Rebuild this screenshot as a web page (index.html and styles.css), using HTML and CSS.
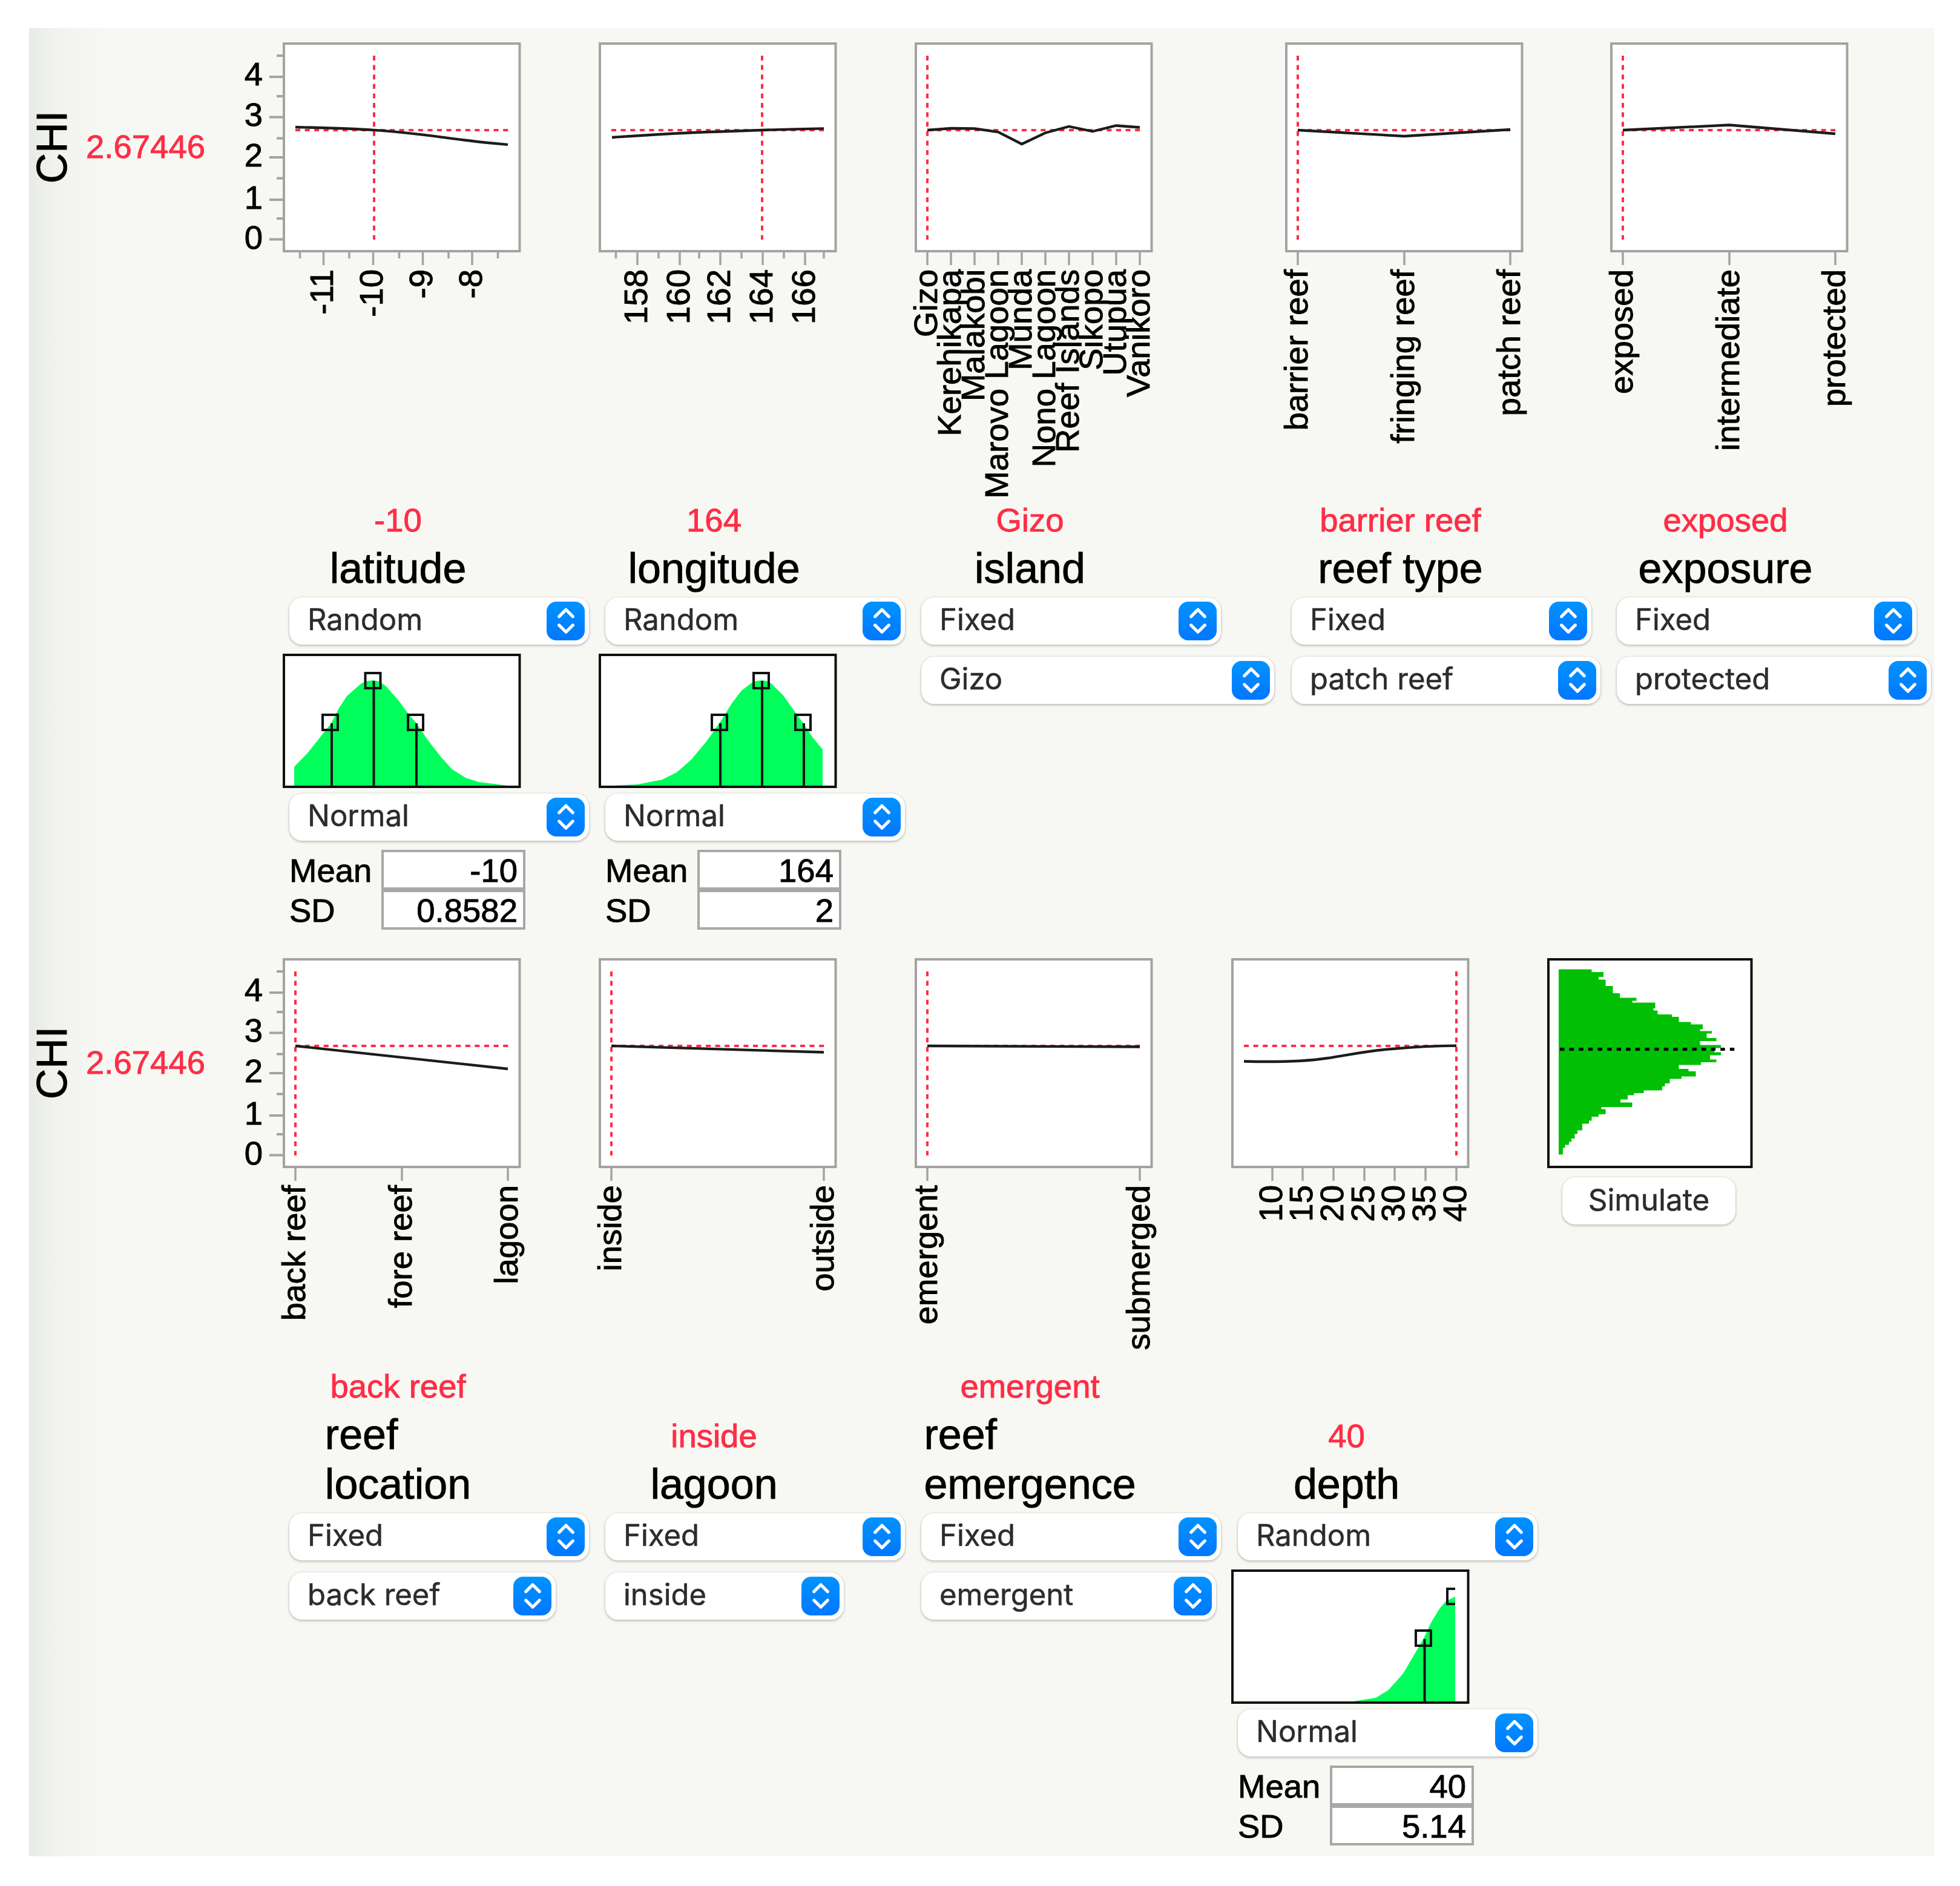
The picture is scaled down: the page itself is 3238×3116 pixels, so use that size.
FILE: index.html
```html
<!DOCTYPE html>
<html lang="en">
<head>
  <meta charset="UTF-8">
  <title>Prediction Profiler</title>
  <link rel="stylesheet" href="styles.css">
</head>
<body>

  <!-- Shared shapes -->
  <svg class="defs">
    <defs>
      <symbol id="arrows" viewBox="0 0 64 64">
        <path d="M21 24.5 L32.5 13 L44 24.5 M21 39 L32.5 50.5 L44 39" fill="none" stroke="#fff" stroke-width="5.2" stroke-linecap="round" stroke-linejoin="round"/>
      </symbol>
      <g id="frame">
        <rect class="frame" x="2" y="2" width="389.5" height="343"/>
        <path class="target" d="M21 145 H373"/>
      </g>
      <g id="ticks3">
        <path class="tick" d="M21 347 V368 M197 347 V368 M372 347 V368"/>
      </g>
      <g id="yticks">
        <path class="ytick" d="M397 57 H419 M397 123.5 H419 M397 190 H419 M397 260 H419 M397 325.5 H419"/>
        <path class="ytick" d="M409 22 H419 M409 89 H419 M409 158.5 H419 M409 224.5 H419 M409 291 H419"/>
      </g>
    </defs>
  </svg>

  <div class="panel">

    <!-- First row of factors -->
    <div class="row row-top">
      <svg class="response" viewBox="0 0 419 370">
        <text class="response-name" transform="translate(62 173) rotate(-90)">CHI</text>
        <text class="response-value" x="94" y="191">2.67446</text>
        <text class="num" x="386" y="71">4</text>
        <text class="num" x="386" y="138">3</text>
        <text class="num" x="386" y="205">2</text>
        <text class="num" x="386" y="275">1</text>
        <text class="num" x="386" y="341">0</text>
        <use href="#yticks"/>
      </svg>

      <div class="factor">
        <svg class="chart" viewBox="0 0 394 670">
          <use href="#frame"/>
          <path class="current" d="M151 22 V326"/>
          <path class="curve" d="M21 140 C60 141 110 142 150 144.8 C210 148 270 158 313 163 C335 166 350 167 372 168.8"/>
          <path class="tick" d="M67.5 347 V368 M149.5 347 V368 M231.5 347 V368 M313 347 V368"/>
          <path class="tick" d="M28.5 347 V357 M110 347 V357 M192.5 347 V357 M274 347 V357 M355.5 347 V357"/>
          <text class="lab" transform="translate(83 375) rotate(-90)">-11</text>
          <text class="lab" transform="translate(165 375) rotate(-90)">-10</text>
          <text class="lab" transform="translate(247 375) rotate(-90)">-9</text>
          <text class="lab" transform="translate(329 375) rotate(-90)">-8</text>
        </svg>
        <div class="head">
          <span class="value">-10</span>
          <span class="name">latitude</span>
        </div>
        <div class="select">Random<svg><use href="#arrows"/></svg></div>
        <svg class="dist" viewBox="0 0 394 222">
          <rect class="dist-bg" width="393" height="222"/>
          <polygon class="density" points="19,220 19,187 42,163 65,134 80,115 93,90 106,70 130,49 140,45 150,44 160,46 171,54 192,78 208,100 221,115 240,143 261,170 280,191 302,205 324,212 372,218 372,220"/>
          <path class="stem" d="M81 115 V220 M150.5 45 V220 M221 115 V220"/>
          <rect class="handle" x="66" y="101" width="25" height="25"/>
          <rect class="handle" x="136.5" y="32" width="25" height="25"/>
          <rect class="handle" x="207" y="101" width="25" height="25"/>
          <rect class="dist-frame" x="2" y="2" width="389.5" height="218"/>
        </svg>
        <div class="select">Normal<svg><use href="#arrows"/></svg></div>
        <div class="params">
          <span>Mean</span><div class="field">-10</div>
          <span>SD</span><div class="field">0.8582</div>
        </div>
      </div>

      <div class="factor">
        <svg class="chart" viewBox="0 0 394 670">
          <use href="#frame"/>
          <path class="current" d="M270 22 V326"/>
          <path class="curve" d="M22 157 C80 153 150 149 200 147.5 C260 145 310 143.5 372 142.3"/>
          <path class="tick" d="M64 347 V368 M134 347 V368 M201 347 V368 M271 347 V368 M341 347 V368"/>
          <path class="tick" d="M28.5 347 V357 M99 347 V357 M166 347 V357 M236 347 V357 M306 347 V357 M372 347 V357"/>
          <text class="lab" transform="translate(80 375) rotate(-90)">158</text>
          <text class="lab" transform="translate(150 375) rotate(-90)">160</text>
          <text class="lab" transform="translate(217 375) rotate(-90)">162</text>
          <text class="lab" transform="translate(287 375) rotate(-90)">164</text>
          <text class="lab" transform="translate(357 375) rotate(-90)">166</text>
        </svg>
        <div class="head">
          <span class="value">164</span>
          <span class="name">longitude</span>
        </div>
        <div class="select">Random<svg><use href="#arrows"/></svg></div>
        <svg class="dist" viewBox="0 0 394 222">
          <rect class="dist-bg" width="393" height="222"/>
          <polygon class="density" points="23,220 23,218 64,216 105,208 129,196 153,175 178,145 200,114 220,82 236,61 253,48 261,45 269,44 277,45 286,50 305,69 320,90 338,115 354,139 370,158 370,220"/>
          <path class="stem" d="M201 115 V220 M270 45 V220 M339 115 V220"/>
          <rect class="handle" x="187" y="101" width="25" height="25"/>
          <rect class="handle" x="256" y="32" width="25" height="25"/>
          <rect class="handle" x="325" y="101" width="25" height="25"/>
          <rect class="dist-frame" x="2" y="2" width="389.5" height="218"/>
        </svg>
        <div class="select">Normal<svg><use href="#arrows"/></svg></div>
        <div class="params">
          <span>Mean</span><div class="field">164</div>
          <span>SD</span><div class="field">2</div>
        </div>
      </div>

      <div class="factor">
        <svg class="chart" viewBox="0 0 394 670">
          <use href="#frame"/>
          <path class="current" d="M21 22 V326"/>
          <polyline class="curve" points="21,145 60,142 99,142.5 138,148 177,168 216,149.5 255,139 294,147 333,137.5 372,140.5"/>
          <path class="tick" d="M21 347 V368 M60 347 V368 M99 347 V368 M138 347 V368 M177 347 V368 M216 347 V368 M255 347 V368 M294 347 V368 M333 347 V368 M372 347 V368"/>
          <text class="lab" transform="translate(37 375) rotate(-90)">Gizo</text>
          <text class="lab" transform="translate(76 375) rotate(-90)">Kerehikapa</text>
          <text class="lab" transform="translate(115 375) rotate(-90)">Malakobi</text>
          <text class="lab" transform="translate(154 375) rotate(-90)">Marovo Lagoon</text>
          <text class="lab" transform="translate(193 375) rotate(-90)">Munda</text>
          <text class="lab" transform="translate(232 375) rotate(-90)">Nono Lagoon</text>
          <text class="lab" transform="translate(271 375) rotate(-90)">Reef Islands</text>
          <text class="lab" transform="translate(310 375) rotate(-90)">Sikopo</text>
          <text class="lab" transform="translate(349 375) rotate(-90)">Utupua</text>
          <text class="lab" transform="translate(388 375) rotate(-90)">Vanikoro</text>
        </svg>
        <div class="head">
          <span class="value">Gizo</span>
          <span class="name">island</span>
        </div>
        <div class="select">Fixed<svg><use href="#arrows"/></svg></div>
        <div class="select level island">Gizo<svg><use href="#arrows"/></svg></div>
      </div>

      <div class="factor">
        <svg class="chart" viewBox="0 0 394 670">
          <use href="#frame"/>
          <path class="current" d="M21 22 V326"/>
          <polyline class="curve" points="21,145 197,155 372,144"/>
          <use href="#ticks3"/>
          <text class="lab" transform="translate(37 375) rotate(-90)">barrier reef</text>
          <text class="lab" transform="translate(213 375) rotate(-90)">fringing reef</text>
          <text class="lab" transform="translate(388 375) rotate(-90)">patch reef</text>
        </svg>
        <div class="head">
          <span class="value">barrier reef</span>
          <span class="name">reef type</span>
        </div>
        <div class="select">Fixed<svg><use href="#arrows"/></svg></div>
        <div class="select level reef-type">patch reef<svg><use href="#arrows"/></svg></div>
      </div>

      <div class="factor">
        <svg class="chart" viewBox="0 0 394 670">
          <use href="#frame"/>
          <path class="current" d="M21 22 V326"/>
          <polyline class="curve" points="21,145 197,136.5 372,151"/>
          <use href="#ticks3"/>
          <text class="lab" transform="translate(37 375) rotate(-90)">exposed</text>
          <text class="lab" transform="translate(213 375) rotate(-90)">intermediate</text>
          <text class="lab" transform="translate(388 375) rotate(-90)">protected</text>
        </svg>
        <div class="head">
          <span class="value">exposed</span>
          <span class="name">exposure</span>
        </div>
        <div class="select">Fixed<svg><use href="#arrows"/></svg></div>
        <div class="select level exposure">protected<svg><use href="#arrows"/></svg></div>
      </div>
    </div>

    <!-- Second row of factors -->
    <div class="row row-bottom">
      <svg class="response" viewBox="0 0 419 370">
        <text class="response-name" transform="translate(62 173) rotate(-90)">CHI</text>
        <text class="response-value" x="94" y="191">2.67446</text>
        <text class="num" x="386" y="71">4</text>
        <text class="num" x="386" y="138">3</text>
        <text class="num" x="386" y="205">2</text>
        <text class="num" x="386" y="275">1</text>
        <text class="num" x="386" y="341">0</text>
        <use href="#yticks"/>
      </svg>

      <div class="factor">
        <svg class="chart" viewBox="0 0 394 670">
          <use href="#frame"/>
          <path class="current" d="M21 22 V326"/>
          <polyline class="curve" points="21,145 372,183"/>
          <use href="#ticks3"/>
          <text class="lab" transform="translate(37 375) rotate(-90)">back reef</text>
          <text class="lab" transform="translate(213 375) rotate(-90)">fore reef</text>
          <text class="lab" transform="translate(388 375) rotate(-90)">lagoon</text>
        </svg>
        <div class="head">
          <span class="value">back reef</span>
          <span class="name">reef<br>location</span>
        </div>
        <div class="select">Fixed<svg><use href="#arrows"/></svg></div>
        <div class="select level location">back reef<svg><use href="#arrows"/></svg></div>
      </div>

      <div class="factor">
        <svg class="chart" viewBox="0 0 394 670">
          <use href="#frame"/>
          <path class="current" d="M21 22 V326"/>
          <polyline class="curve" points="21,145 372,155.5"/>
          <path class="tick" d="M21 347 V368 M372 347 V368"/>
          <text class="lab" transform="translate(37 375) rotate(-90)">inside</text>
          <text class="lab" transform="translate(388 375) rotate(-90)">outside</text>
        </svg>
        <div class="head">
          <span class="value">inside</span>
          <span class="name">lagoon</span>
        </div>
        <div class="select">Fixed<svg><use href="#arrows"/></svg></div>
        <div class="select level lagoon">inside<svg><use href="#arrows"/></svg></div>
      </div>

      <div class="factor">
        <svg class="chart" viewBox="0 0 394 670">
          <use href="#frame"/>
          <path class="current" d="M21 22 V326"/>
          <polyline class="curve" points="21,145 372,146.5"/>
          <path class="tick" d="M21 347 V368 M372 347 V368"/>
          <text class="lab" transform="translate(37 375) rotate(-90)">emergent</text>
          <text class="lab" transform="translate(388 375) rotate(-90)">submerged</text>
        </svg>
        <div class="head">
          <span class="value">emergent</span>
          <span class="name">reef<br>emergence</span>
        </div>
        <div class="select">Fixed<svg><use href="#arrows"/></svg></div>
        <div class="select level emergence">emergent<svg><use href="#arrows"/></svg></div>
      </div>

      <div class="factor">
        <svg class="chart" viewBox="0 0 394 670">
          <use href="#frame"/>
          <path class="current" d="M372 22 V326"/>
          <path class="curve" d="M21 170.5 C80 172 120 171 157 165.5 C200 159 230 152 272 149.5 C310 146 340 145 372 144.7"/>
          <path class="tick" d="M68 347 V368 M118 347 V368 M169 347 V368 M220 347 V368 M270 347 V368 M321 347 V368 M372 347 V368"/>
          <text class="lab" transform="translate(84 375) rotate(-90)">10</text>
          <text class="lab" transform="translate(134 375) rotate(-90)">15</text>
          <text class="lab" transform="translate(185 375) rotate(-90)">20</text>
          <text class="lab" transform="translate(236 375) rotate(-90)">25</text>
          <text class="lab" transform="translate(286 375) rotate(-90)">30</text>
          <text class="lab" transform="translate(337 375) rotate(-90)">35</text>
          <text class="lab" transform="translate(388 375) rotate(-90)">40</text>
        </svg>
        <div class="head">
          <span class="value">40</span>
          <span class="name">depth</span>
        </div>
        <div class="select">Random<svg><use href="#arrows"/></svg></div>
        <svg class="dist" viewBox="0 0 394 222">
          <rect class="dist-bg" width="393" height="222"/>
          <polygon class="density" points="189,220 239,212 260,199 284,172 304,138 318,114 330,88 344,65 354,53 370,45 370,220"/>
          <path class="stem" d="M319.5 115 V220"/>
          <rect class="handle" x="305" y="101" width="25" height="25"/>
          <path class="handle" d="M370 32 H357 V57 H370"/>
          <rect class="dist-frame" x="2" y="2" width="389.5" height="218"/>
        </svg>
        <div class="select">Normal<svg><use href="#arrows"/></svg></div>
        <div class="params">
          <span>Mean</span><div class="field">40</div>
          <span>SD</span><div class="field">5.14</div>
        </div>
      </div>

      <!-- Simulated distribution of the response -->
      <div class="simulation">
        <svg class="histogram" viewBox="0 0 340 347">
          <rect class="hist-frame" x="2" y="2" width="335.5" height="343"/>
          <path class="hist" d="M19 18.5 H73.5 V23 H93 V31 H85 V35.5 H96.5 V46 H108.5 V58 H120 V65.5 H147.5 V70.5 H140.5 V73.5 H178.5 V83 H175.5 V86.5 H182.5 V93 H206 V97 H217.5 V105.5 H237.5 V109.5 H257 V117.5 H252.5 V120.5 H272 V124.5 H263.5 V132 H279.5 V137 H252.5 V143.5 H287 V148.5 H276 V155.5 H287 V160.5 H269 V167.5 H279.5 V172 H254 V176.5 H217.5 V183 H233.5 V187 H245.5 V195.5 H222 V199.5 H202.5 V207 H194.5 V212 H190 V218.5 H159.5 V223 H143.5 V226.5 H133 V233.5 H121 V238.5 H140.5 V246 H89.5 V249.5 H96.5 V258 H85 V262 H73.5 V268.5 H69 V273.5 H58 V284.5 H50 V290.5 H45.5 V298 H40 V303.5 H36 V308.5 H29.5 V313.5 H26 V324.5 H19 Z"/>
          <path class="mean-line" d="M21 150.5 H311"/>
        </svg>
        <button class="simulate">Simulate</button>
      </div>
    </div>

  </div>

</body>
</html>
```
FILE: styles.css
```css
body {
  margin: 0;
  background: #fff;
  font-family: "Liberation Sans", Arial, sans-serif;
  font-size: 54.5px;
  color: #000;
  -webkit-text-stroke: 0.9px;
}

svg {
  display: block;
}

.defs {
  position: absolute;
  width: 0;
  height: 0;
}

.panel {
  box-sizing: border-box;
  width: 3148px;
  height: 3021px;
  margin: 46px 0 0 48px;
  padding-top: 24px;
  background: linear-gradient(to right, #e8eae5 0, #f0f2ed 40px, #f4f5f0 75px, #f7f8f3 130px);
}

.row {
  display: grid;
  height: 1513px;
}

.row-top {
  grid-template-columns: 419px 522px 522px 612px 537px 536px;
}

.row-bottom {
  grid-template-columns: 419px 522px 522px 523px 522px 640px;
  height: 1483px;
}

/* response axis */
.response {
  width: 419px;
  height: 370px;
}

.response text,
.chart text {
  stroke: #000;
  stroke-width: 0.9px;
}

.response-name {
  font-size: 70px;
  text-anchor: middle;
}

.response .response-value {
  fill: #ff2d46;
  stroke: #ff2d46;
}

.num,
.lab {
  text-anchor: end;
}

.ytick,
.tick {
  fill: none;
  stroke: #a3a3a3;
  stroke-width: 4;
}

.tick {
  stroke-width: 3.5;
}

/* profile charts */
.chart {
  width: 394px;
  height: 670px;
  overflow: visible;
}

.frame {
  fill: #fff;
  stroke: #a3a3a3;
  stroke-width: 4;
}

.target,
.current {
  fill: none;
  stroke: #ff2d46;
  stroke-width: 4;
  stroke-dasharray: 8 7.6;
}

.curve {
  fill: none;
  stroke: #1c1c1c;
  stroke-width: 4.3;
}

/* factor heading */
.head {
  display: flex;
  flex-direction: column;
  justify-content: flex-end;
  align-items: center;
  width: 381px;
  height: 240px;
  margin-bottom: 7px;
}

.value {
  line-height: 76px;
  color: #ff2d46;
}

.name {
  font-size: 70px;
  line-height: 82px;
  white-space: nowrap;
}

/* drop-down */
.select {
  box-sizing: border-box;
  display: flex;
  justify-content: space-between;
  align-items: center;
  width: 495px;
  height: 78px;
  margin-left: 11px;
  padding: 0 7px 5px 30px;
  background: #fff;
  border-radius: 21px;
  box-shadow: 0 2px 4px rgba(0, 0, 0, 0.22), 0 0 3px rgba(0, 0, 0, 0.12);
  font-family: Inter, sans-serif;
  font-size: 49px;
  line-height: 72px;
  color: #2c2c2c;
  white-space: nowrap;
  -webkit-text-stroke: 0.5px;
}

.select svg {
  width: 63px;
  height: 64px;
  margin-top: 5px;
  border-radius: 16px;
  background: linear-gradient(#0093ff, #0077ff);
}

.level { margin-top: 20px; }
.island { width: 583px; }
.reef-type { width: 510px; }
.exposure { width: 519px; }
.location { width: 440px; }
.lagoon { width: 394px; }
.emergence { width: 487px; }

/* input distribution */
.dist {
  width: 394px;
  height: 222px;
  margin: 15px 0 9px;
}

.dist-bg { fill: #fff; }
.density { fill: #00ff5a; }

.dist-frame,
.handle,
.stem {
  fill: none;
  stroke: #111;
  stroke-width: 4;
}

.params {
  display: grid;
  grid-template-columns: 152px 238px;
  grid-auto-rows: 66px;
  margin: 15px 0 0 11px;
  line-height: 69px;
}

.field {
  box-sizing: border-box;
  height: 66px;
  padding-right: 9px;
  border: 4px solid #a8a8a8;
  background: #fff;
  line-height: 62px;
  text-align: right;
}

/* simulation */
.simulation {
  width: 340px;
}

.histogram {
  width: 340px;
  height: 347px;
}

.hist-frame {
  fill: #fff;
  stroke: #111;
  stroke-width: 4;
}

.hist { fill: #00bf04; }

.mean-line {
  stroke: #000;
  stroke-width: 5;
  stroke-dasharray: 7.5 8.1;
}

.simulate {
  display: block;
  width: 286px;
  height: 78px;
  margin: 15px 0 0 25px;
  padding: 0 0 4px;
  border: 0;
  border-radius: 21px;
  background: #fff;
  box-shadow: 0 2px 4px rgba(0, 0, 0, 0.22), 0 0 3px rgba(0, 0, 0, 0.12);
  font-family: Inter, sans-serif;
  font-size: 49.5px;
  color: #2c2c2c;
  -webkit-text-stroke: 0.5px;
}
```
